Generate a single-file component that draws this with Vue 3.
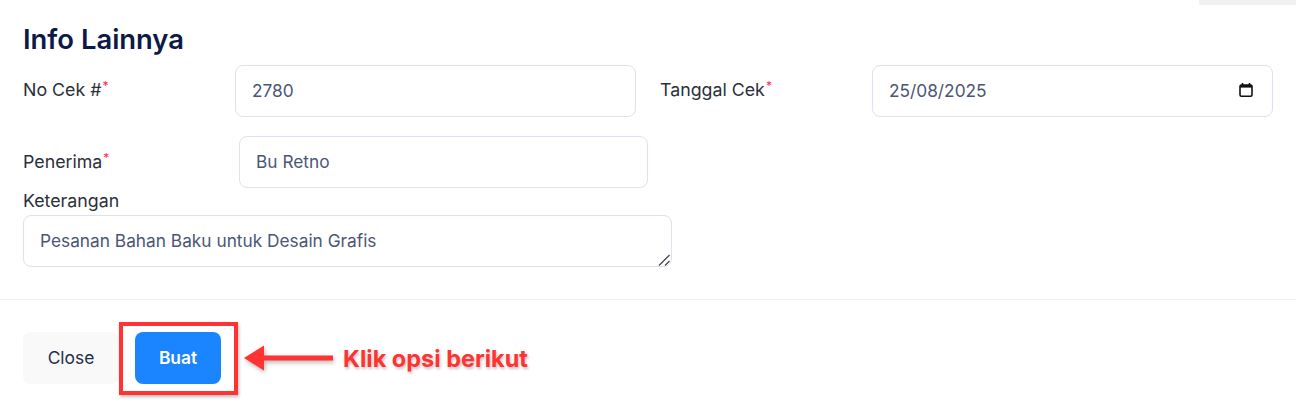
<template>
  <div class="page">
    <div class="top-tab"></div>

    <section class="form-body">
      <h2 class="title">Info Lainnya</h2>

      <div class="row row-cek">
        <div class="field">
          <label class="label">No Cek #<sup class="req">*</sup></label>
          <input class="control" type="text" value="2780" />
        </div>
        <div class="field">
          <label class="label">Tanggal Cek<sup class="req">*</sup></label>
          <div class="date-wrap">
            <input class="control date" type="text" value="25/08/2025" />
            <svg class="cal" viewBox="0 0 16 16" width="16" height="16">
              <path d="M4.5 1v2.5M11.5 1v2.5" stroke="#111" stroke-width="1.6" fill="none" />
              <rect x="2" y="3" width="12" height="11.2" rx="1.4" stroke="#111" stroke-width="1.6" fill="none" />
              <rect x="2" y="3" width="12" height="2.6" fill="#111" />
            </svg>
          </div>
        </div>
      </div>

      <div class="field field-penerima">
        <label class="label">Penerima<sup class="req">*</sup></label>
        <input class="control" type="text" value="Bu Retno" />
      </div>

      <div class="field-note">
        <label class="label label-note">Keterangan</label>
        <div class="note-wrap">
          <textarea class="control note">Pesanan Bahan Baku untuk Desain Grafis</textarea>
          <svg class="grip" viewBox="0 0 12 12" width="12" height="12">
            <path d="M1 11.5 L11.5 1 M7 11.5 L11.5 7" stroke="#444" stroke-width="1.2" fill="none" />
          </svg>
        </div>
      </div>
    </section>

    <footer class="form-footer">
      <button class="btn btn-close">Close</button>
      <div class="highlight-wrap">
        <button class="btn btn-buat">Buat</button>
        <div class="highlight"></div>
        <div class="callout">
          <svg class="arrow" viewBox="0 0 92 30" width="92" height="30">
            <path d="M1 14 L21 1.5 V11.5 H90 V16.5 H21 V26.5 Z" fill="#ff3333" />
          </svg>
          <span class="callout-text">Klik opsi berikut</span>
        </div>
      </div>
    </footer>
  </div>
</template>

<script setup>
</script>

<style>
html,
body {
  margin: 0;
  background: #fff;
}
</style>

<style scoped>
.page {
  position: relative;
  width: 1296px;
  height: 409px;
  overflow: hidden;
  background: #fff;
  font-family: Inter, "Noto Sans", sans-serif;
  color: #2b2f3a;
}

.top-tab {
  position: absolute;
  top: 0;
  right: 0;
  width: 97px;
  height: 5px;
  background: #f1f1f4;
}

.form-body {
  padding: 22px 23px 0;
}

.title {
  margin: 0 0 9px;
  font-size: 27.4px;
  line-height: 34px;
  font-weight: 600;
  color: #0d1a45;
}

.row-cek {
  display: grid;
  grid-template-columns: 613px 613px;
  column-gap: 24px;
}

.field {
  display: flex;
  align-items: flex-start;
}

.field .label {
  flex: 0 0 212px;
  padding-top: 14px;
}

.field-penerima {
  width: 625px;
  margin-top: 19px;
}

.field-penerima .label {
  flex: 0 0 216px;
  padding-top: 15px;
}

.label {
  font-size: 17.8px;
  line-height: 22px;
  color: #2b2f3a;
}

.label-note {
  display: block;
  line-height: 25px;
  padding-bottom: 2px;
}

.req {
  color: #f8285a;
  font-size: 12px;
  line-height: 0;
  vertical-align: 6px;
  margin-left: 1px;
}

.control {
  flex: 1;
  min-width: 0;
  box-sizing: border-box;
  width: 100%;
  height: 52px;
  padding: 0 16px 2px;
  border: 1px solid #dfe1f0;
  border-radius: 8px;
  background: #fff;
  font-family: inherit;
  font-size: 17.3px;
  color: #4b5675;
  outline: none;
}

.date-wrap {
  position: relative;
  flex: 1;
}

.cal {
  position: absolute;
  top: 17px;
  right: 19px;
}

.field-note {
  width: 649px;
}

.note-wrap {
  position: relative;
}

.note {
  display: block;
  padding: 13px 16px;
  line-height: 24px;
  resize: none;
}

.grip {
  position: absolute;
  right: 2px;
  bottom: 1px;
}

.form-footer {
  display: flex;
  gap: 16px;
  margin-top: 32px;
  padding: 32px 23px 0;
  border-top: 1px solid #f1f1f4;
}

.btn {
  height: 52px;
  padding: 0 0 2px;
  border: none;
  border-radius: 8px;
  font-family: inherit;
  font-size: 17.4px;
  font-weight: 500;
}

.btn-close {
  width: 96px;
  background: #f9f9f9;
  color: #252f4a;
  font-weight: 400;
}

.highlight-wrap {
  position: relative;
}

.btn-buat {
  display: block;
  width: 86px;
  background: #1b84ff;
  color: #fff;
  font-weight: 600;
}

.highlight {
  position: absolute;
  top: -10px;
  left: -16px;
  width: 119px;
  height: 73px;
  box-sizing: border-box;
  border: 4px solid #ff3333;
  box-shadow: 1px 2px 3px rgba(0, 0, 0, 0.25);
}

.callout {
  position: absolute;
  top: 12px;
  left: 108px;
  display: flex;
  align-items: center;
  gap: 8px;
  white-space: nowrap;
}

.arrow {
  display: block;
  filter: drop-shadow(1px 2px 2px rgba(0, 0, 0, 0.3));
}

.callout-text {
  font-size: 23.5px;
  line-height: 30px;
  font-weight: 700;
  color: #ff3333;
  text-shadow: 1px 2px 3px rgba(0, 0, 0, 0.25);
}
</style>
